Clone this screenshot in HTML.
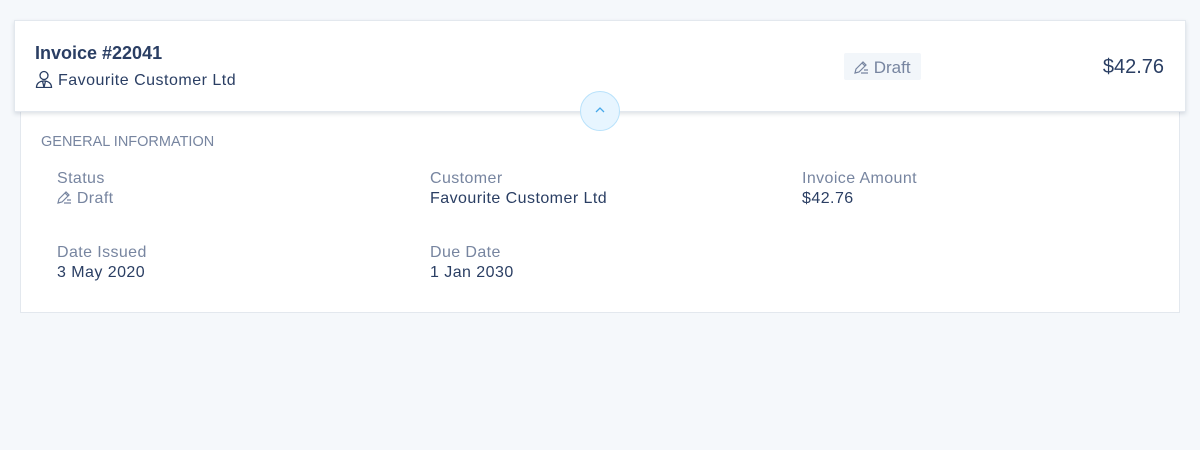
<!DOCTYPE html>
<html><head><style>
*{margin:0;padding:0;box-sizing:border-box}
body{width:1200px;height:450px;background:#f5f8fb;font-family:"Liberation Sans",sans-serif;position:relative;overflow:hidden;color:#2a3e63}
.panel{position:absolute;left:20px;top:100px;width:1160px;height:213px;background:#fff;border:1px solid #e3e8ee}
.card{position:absolute;left:14px;top:20px;width:1172px;height:92px;background:#fff;border:1px solid #e3e8ee;box-shadow:0 2px 4px rgba(40,60,90,.15)}
.t{position:absolute;white-space:nowrap}
.lab{color:#7785a0;font-size:16px;letter-spacing:.4px}
.val{color:#2a3e63;font-size:16px;letter-spacing:.45px}
</style></head><body>
<div class="panel">
<div class="t" style="left:20px;top:33px;font-size:14.5px;color:#7785a0">GENERAL INFORMATION</div>
<div class="t lab" style="left:36px;top:69px">Status</div>
<div class="t lab" style="left:36px;top:89px"><svg width="15" height="14" viewBox="0 0 15 14" style="vertical-align:-1px" fill="none" stroke="#7785a0" stroke-width="1.2"><path d="M1 13l1-4 7-7 3 3-7 7z M8 3l3 3 M7 13h7 M10 10h4"/></svg> Draft</div>
<div class="t lab" style="left:409px;top:69px">Customer</div>
<div class="t val" style="left:409px;top:89px">Favourite Customer Ltd</div>
<div class="t lab" style="left:781px;top:69px">Invoice Amount</div>
<div class="t val" style="left:781px;top:89px">$42.76</div>
<div class="t lab" style="left:36px;top:143px">Date Issued</div>
<div class="t val" style="left:36px;top:163px">3 May 2020</div>
<div class="t lab" style="left:409px;top:143px">Due Date</div>
<div class="t val" style="left:409px;top:163px">1 Jan 2030</div>
</div>
<div class="card">
<div class="t" style="left:20px;top:22px;font-size:18px;font-weight:bold">Invoice #22041</div>
<div class="t" style="left:20px;top:49px;font-size:16px;letter-spacing:.5px"><svg width="18" height="18" viewBox="0 0 18 18" style="vertical-align:-3px" fill="none" stroke="#2a3e63" stroke-width="1.3"><circle cx="9" cy="5.5" r="4"/><path d="M1.5 17.5c0-4 3-6.5 7.5-6.5s7.5 2.5 7.5 6.5z M7.5 11l1.5 6.5 1.5-6.5"/></svg> Favourite Customer Ltd</div>
<div style="position:absolute;left:829px;top:32px;width:77px;height:27px;background:#f2f6fa;border-radius:2px"></div>
<div class="t" style="left:839px;top:37px;font-size:17px;color:#7785a0"><svg width="15" height="14" viewBox="0 0 15 14" style="vertical-align:-1px" fill="none" stroke="#7785a0" stroke-width="1.2"><path d="M1 13l1-4 7-7 3 3-7 7z M8 3l3 3 M7 13h7 M10 10h4"/></svg> Draft</div>
<div class="t" style="right:21px;top:35px;font-size:20px">$42.76</div>
</div>
<div style="position:absolute;left:580px;top:91px;width:40px;height:40px;border-radius:50%;background:#e7f5ff;border:1px solid #b9e2fb"><svg width="12" height="8" viewBox="0 0 12 8" style="position:absolute;left:13px;top:14px" fill="none" stroke="#47a8ea" stroke-width="1.3"><path d="M2 6l4-4 4 4"/></svg></div>
</body></html>
